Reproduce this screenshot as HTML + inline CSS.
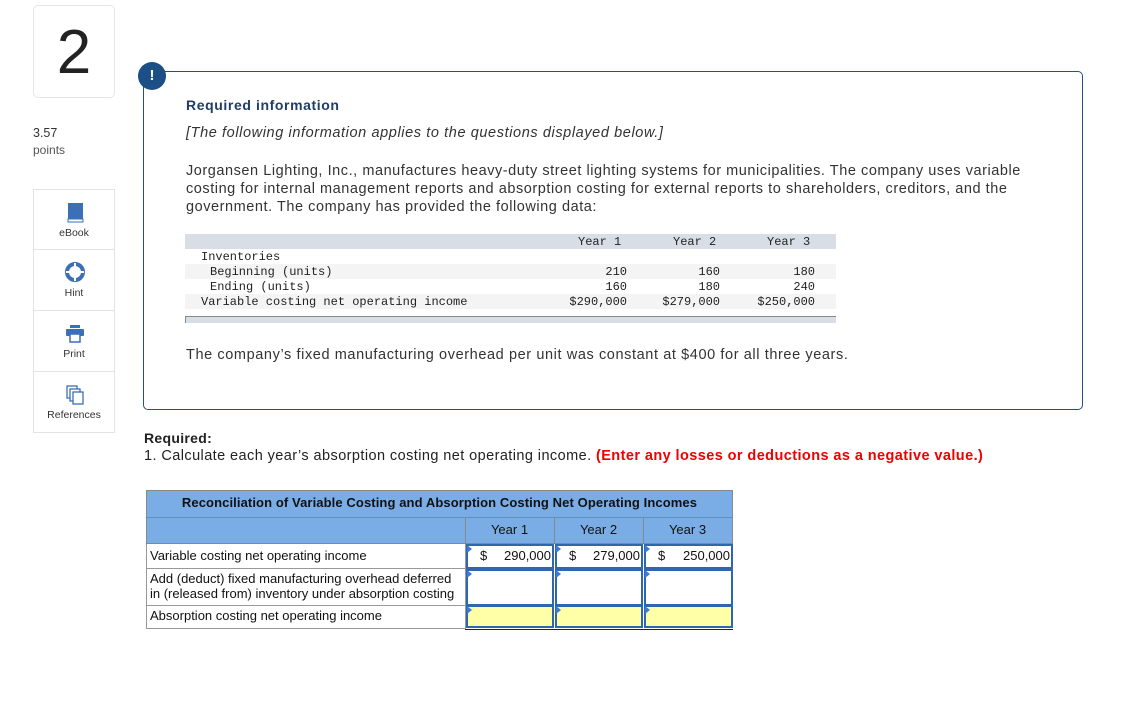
<!DOCTYPE html>
<html><head><meta charset="utf-8"><style>
*{margin:0;padding:0;box-sizing:border-box}
body{width:1129px;height:701px;background:#fff;position:relative;font-family:"Liberation Sans",sans-serif;color:#222;overflow:hidden}
.a{position:absolute;white-space:nowrap}
.mono{font-family:"Liberation Mono",monospace;font-size:12px;color:#222}
.side{position:absolute;left:33px;width:82px;height:61px;border:1px solid #e3e3e3;text-align:center;font-size:10.5px;color:#333}
.side .l{position:absolute;left:0;right:0;top:37px}
.side svg{position:absolute;left:31px;top:12px}
.t{position:absolute;font-family:"Liberation Sans",sans-serif;font-size:13px;color:#111;white-space:nowrap}
.cell{position:absolute;border:2px solid #2f66ae;background:#fff}
.y{background:#ffffa8}
.tri{position:absolute;width:0;height:0;border-top:4px solid transparent;border-bottom:4px solid transparent;border-left:5px solid #3a7bd5}
.ls{letter-spacing:0.6px}
</style></head><body>
<div class="a" style="left:33px;top:5px;width:82px;height:93px;border:1px solid #e6e6e6;border-radius:5px;text-align:center;font-size:62px;line-height:93px;color:#222">2</div>
<div class="a" style="left:33px;top:126px;font-size:12.5px;color:#333">3.57</div>
<div class="a" style="left:33px;top:143px;font-size:12px;color:#555">points</div>

<div class="side" style="top:189px"><svg width="20" height="22" viewBox="0 0 20 22"><rect x="3" y="1" width="15" height="17" fill="#3b6fb6"/><rect x="3" y="17" width="15" height="3" fill="#fff" stroke="#3b6fb6" stroke-width="1"/></svg><div class="l">eBook</div></div>
<div class="side" style="top:250px;border-top:none"><svg width="20" height="22" viewBox="0 0 20 22"><circle cx="10" cy="10" r="8" fill="none" stroke="#3b6fb6" stroke-width="4"/><circle cx="10" cy="10" r="3" fill="#fff"/><path d="M10 1v5M10 14v5M1 10h5M14 10h5" stroke="#fff" stroke-width="2"/></svg><div class="l">Hint</div></div>
<div class="side" style="top:311px;border-top:none"><svg width="20" height="22" viewBox="0 0 20 22"><rect x="5" y="2" width="10" height="3" fill="#3b6fb6"/><rect x="1" y="6" width="18" height="7" rx="1" fill="#3b6fb6"/><rect x="5" y="11" width="10" height="8" fill="#fff" stroke="#3b6fb6" stroke-width="1.5"/></svg><div class="l">Print</div></div>
<div class="side" style="top:372px;border-top:none"><svg width="20" height="22" viewBox="0 0 20 22"><rect x="2" y="2" width="10" height="12" fill="#fff" stroke="#3b6fb6" stroke-width="1.3"/><rect x="5" y="5" width="10" height="12" fill="#fff" stroke="#3b6fb6" stroke-width="1.3"/><rect x="8" y="8" width="10" height="12" fill="#fff" stroke="#3b6fb6" stroke-width="1.3"/></svg><div class="l">References</div></div>

<div class="a" style="left:143px;top:71px;width:940px;height:339px;border:1px solid #23508a;border-radius:5px"></div>
<div class="a" style="left:138px;top:62px;width:28px;height:28px;border-radius:50%;background:#1c4f85;color:#fff;font-weight:bold;font-size:15px;text-align:center;line-height:28px">!</div>
<div class="a ls" style="left:186px;top:97px;font-size:14px;font-weight:bold;color:#1f3e66">Required information</div>
<div class="a ls" style="left:186px;top:125px;font-size:14.5px;font-style:italic;color:#333">[The following information applies to the questions displayed below.]</div>
<div class="a" style="left:186px;top:162px;font-size:14.5px;line-height:18px;color:#333;letter-spacing:0.55px">Jorgansen Lighting, Inc., manufactures heavy-duty street lighting systems for municipalities. The company uses variable<br>costing for internal management reports and absorption costing for external reports to shareholders, creditors, and the<br>government. The company has provided the following data:</div>

<div class="a" style="left:185px;top:234px;width:651px;height:15px;background:#d9dde6"></div>
<div class="a" style="left:185px;top:264px;width:651px;height:15px;background:#f4f4f4"></div>
<div class="a" style="left:185px;top:294px;width:651px;height:15px;background:#f4f4f4"></div>
<div class="a" style="left:185px;top:316px;width:651px;height:7px;background:#d9dde6;border-top:1px solid #888;border-left:1px solid #888"></div>
<div class="a mono" style="left:578px;top:235px">Year 1</div>
<div class="a mono" style="left:673px;top:235px">Year 2</div>
<div class="a mono" style="left:767px;top:235px">Year 3</div>
<div class="a mono" style="left:201px;top:250px">Inventories</div>
<div class="a mono" style="left:210px;top:265px">Beginning (units)</div>
<div class="a mono" style="left:210px;top:280px">Ending (units)</div>
<div class="a mono" style="left:201px;top:295px">Variable costing net operating income</div>
<div class="a mono" style="left:527px;top:265px;width:100px;text-align:right;line-height:15px">210<br>160<br>$290,000</div>
<div class="a mono" style="left:620px;top:265px;width:100px;text-align:right;line-height:15px">160<br>180<br>$279,000</div>
<div class="a mono" style="left:715px;top:265px;width:100px;text-align:right;line-height:15px">180<br>240<br>$250,000</div>
<div class="a ls" style="left:186px;top:347px;font-size:14.5px;color:#333">The company’s fixed manufacturing overhead per unit was constant at $400 for all three years.</div>

<div class="a" style="left:144px;top:430px;font-size:14px;font-weight:bold;color:#222;letter-spacing:0.3px">Required:</div>
<div class="a" style="left:144px;top:448px;font-size:14.5px;color:#222;letter-spacing:0.42px">1. Calculate each year’s absorption costing net operating income. <b style="color:#e00">(Enter any losses or deductions as a negative value.)</b></div>

<div class="a" style="left:146px;top:490px;width:587px;height:54px;background:#7aace6;border:1px solid #888"></div>
<div class="a" style="left:146px;top:517px;width:587px;height:1px;background:#888"></div>
<div class="a" style="left:465px;top:517px;width:1px;height:27px;background:#888"></div>
<div class="a" style="left:554px;top:517px;width:1px;height:27px;background:#888"></div>
<div class="a" style="left:643px;top:517px;width:1px;height:27px;background:#888"></div>
<div class="t" style="left:146px;top:495px;width:587px;text-align:center;font-weight:bold;font-size:13px;letter-spacing:0.1px">Reconciliation of Variable Costing and Absorption Costing Net Operating Incomes</div>
<div class="t" style="left:465px;top:522px;width:89px;text-align:center">Year 1</div>
<div class="t" style="left:554px;top:522px;width:89px;text-align:center">Year 2</div>
<div class="t" style="left:643px;top:522px;width:89px;text-align:center">Year 3</div>
<div class="a" style="left:146px;top:544px;width:320px;height:85px;border:1px solid #999;border-top:none"></div>
<div class="a" style="left:146px;top:568px;width:320px;height:1px;background:#999"></div>
<div class="a" style="left:146px;top:605px;width:320px;height:1px;background:#999"></div>
<div class="t" style="left:150px;top:548px">Variable costing net operating income</div>
<div class="t" style="left:150px;top:571px;line-height:15px">Add (deduct) fixed manufacturing overhead deferred<br>in (released from) inventory under absorption costing</div>
<div class="t" style="left:150px;top:608px">Absorption costing net operating income</div>

<div class="cell" style="left:466px;top:544px;width:88px;height:25px"></div>
<div class="cell" style="left:555px;top:544px;width:88px;height:25px"></div>
<div class="cell" style="left:644px;top:544px;width:89px;height:25px"></div>
<div class="t" style="left:480px;top:548px">$</div><div class="t" style="left:480px;top:548px;width:71px;text-align:right">290,000</div>
<div class="t" style="left:569px;top:548px">$</div><div class="t" style="left:569px;top:548px;width:71px;text-align:right">279,000</div>
<div class="t" style="left:658px;top:548px">$</div><div class="t" style="left:658px;top:548px;width:72px;text-align:right">250,000</div>
<div class="cell" style="left:466px;top:569px;width:88px;height:37px"></div>
<div class="cell" style="left:555px;top:569px;width:88px;height:37px"></div>
<div class="cell" style="left:644px;top:569px;width:89px;height:37px"></div>
<div class="cell y" style="left:466px;top:605px;width:88px;height:23px"></div>
<div class="cell y" style="left:555px;top:605px;width:88px;height:23px"></div>
<div class="cell y" style="left:644px;top:605px;width:89px;height:23px"></div>
<div class="a" style="left:465px;top:629px;width:268px;height:1px;background:#222"></div>
<div class="tri" style="left:467px;top:545px"></div><div class="tri" style="left:556px;top:545px"></div><div class="tri" style="left:645px;top:545px"></div>
<div class="tri" style="left:467px;top:570px"></div><div class="tri" style="left:556px;top:570px"></div><div class="tri" style="left:645px;top:570px"></div>
<div class="tri" style="left:467px;top:606px"></div><div class="tri" style="left:556px;top:606px"></div><div class="tri" style="left:645px;top:606px"></div>
</body></html>
